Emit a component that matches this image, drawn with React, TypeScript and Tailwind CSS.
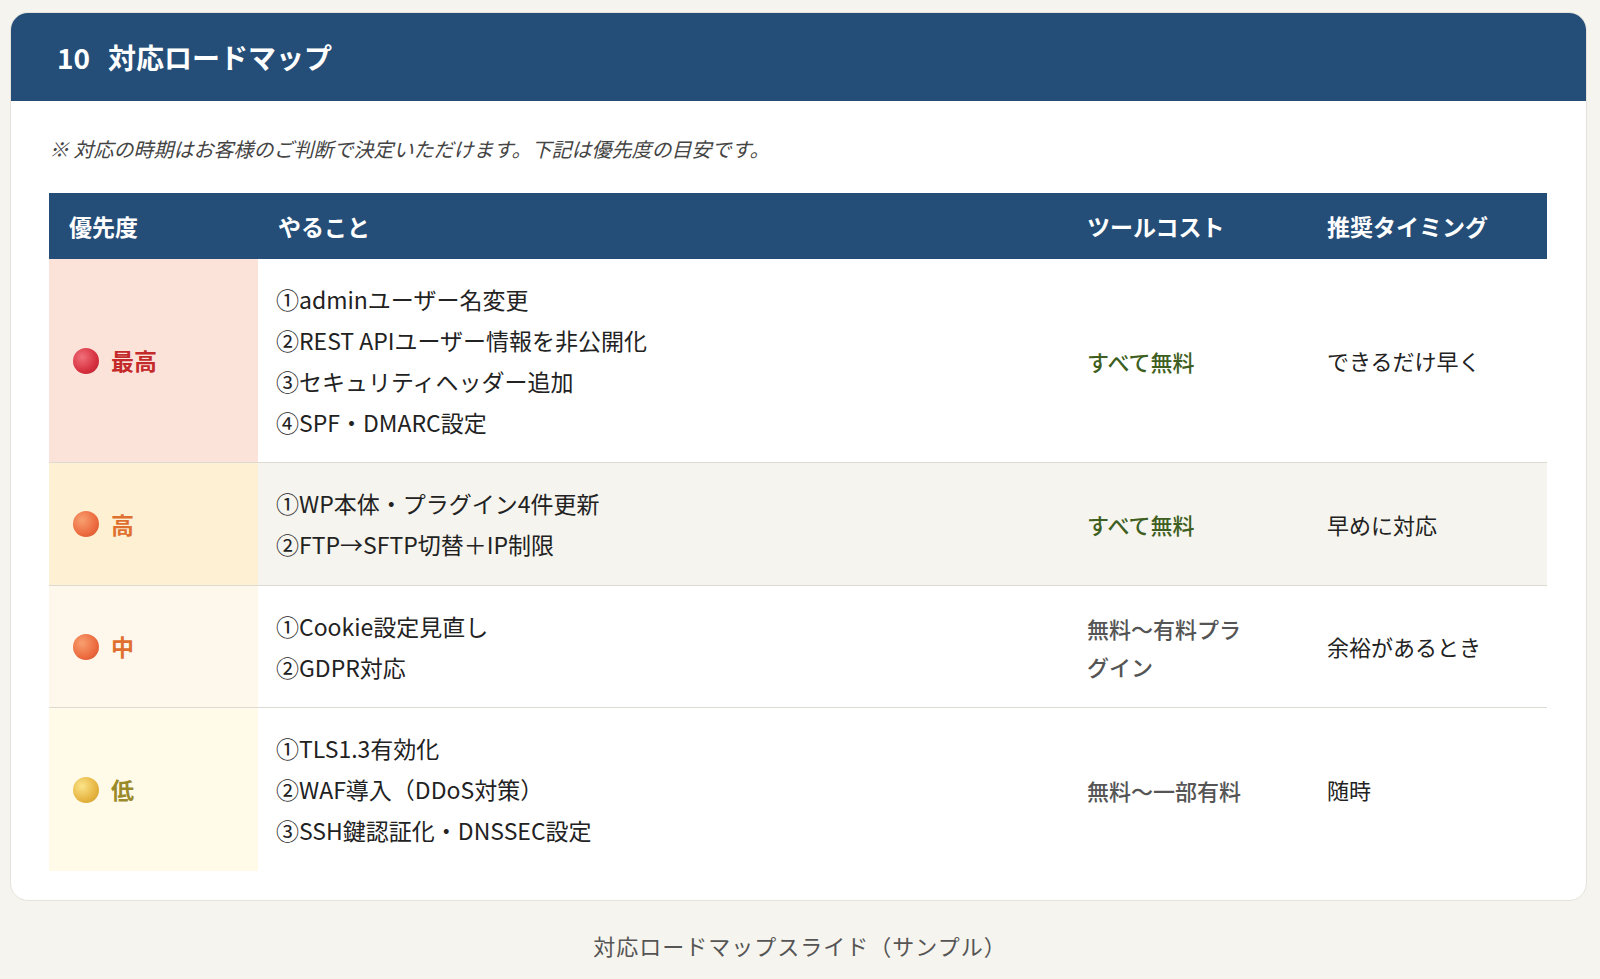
import React from "react";

const F = { fontFamily: '"Noto Sans CJK JP", "Noto Sans", sans-serif' };

type Row = {
  label: string; dot: string; labelColor: string; pbg: string; rbg: string;
  items: string[]; cost: React.ReactNode; costCls: string; timing: string; h: string;
};

const rows: Row[] = [
  { label: "最高", dot: "radial-gradient(circle at 35% 35%, #f0707a, #d6303e 60%, #b0202c)", labelColor: "text-[#c42a2a]", pbg: "bg-[#fce3da]", rbg: "bg-white", items: ["①adminユーザー名変更", "②REST APIユーザー情報を非公開化", "③セキュリティヘッダー追加", "④SPF・DMARC設定"], cost: "すべて無料", costCls: "text-[#3f5f22]", timing: "できるだけ早く", h: "h-[204px]" },
  { label: "高", dot: "radial-gradient(circle at 35% 35%, #f8a070, #ec6a3e 60%, #d0502a)", labelColor: "text-[#e0702f]", pbg: "bg-[#fdf0d3]", rbg: "bg-[#f5f4ee]", items: ["①WP本体・プラグイン4件更新", "②FTP→SFTP切替＋IP制限"], cost: "すべて無料", costCls: "text-[#3f5f22]", timing: "早めに対応", h: "h-[123px]" },
  { label: "中", dot: "radial-gradient(circle at 35% 35%, #f8a070, #ec6a3e 60%, #d0502a)", labelColor: "text-[#e0702f]", pbg: "bg-[#fef8ec]", rbg: "bg-white", items: ["①Cookie設定見直し", "②GDPR対応"], cost: <>無料〜有料プラ<br />グイン</>, costCls: "text-[#555]", timing: "余裕があるとき", h: "h-[122px]" },
  { label: "低", dot: "radial-gradient(circle at 35% 35%, #fbe48a, #e6b440 60%, #c99a2a)", labelColor: "text-[#9a8a2a]", pbg: "bg-[#fffbe8]", rbg: "bg-white", items: ["①TLS1.3有効化", "②WAF導入（DDoS対策）", "③SSH鍵認証化・DNSSEC設定"], cost: "無料〜一部有料", costCls: "text-[#555]", timing: "随時", h: "h-[163px]" },
];

export default function App() {
  return (
    <div style={F} className="w-[1600px] h-[979px] bg-[#f5f4ee] pt-[12px] px-[10px] text-[#222]">
      <div className="w-[1577px] bg-white rounded-[18px] border border-[#e4e2da] overflow-hidden">
        <div className="h-[88px] bg-[#244e78] flex items-center pl-[46px] text-white text-[28px] font-bold">
          <span>10</span><span className="ml-[18px]">対応ロードマップ</span>
        </div>
        <div className="px-[38px] pb-[29px]">
          <div className="h-[92px] flex items-center text-[20px] italic text-[#444] pt-[4px]">※ 対応の時期はお客様のご判断で決定いただけます。下記は優先度の目安です。</div>
          <div className="w-[1498px]">
            <div className="h-[66px] bg-[#244e78] text-white text-[23px] font-bold flex items-center">
              <div className="w-[209px] pl-[20px]">優先度</div>
              <div className="w-[812px] pl-[20px]">やること</div>
              <div className="w-[240px] pl-[17px]">ツールコスト</div>
              <div className="flex-1 pl-[17px]">推奨タイミング</div>
            </div>
            {rows.map((r, i) => (
              <div key={i} className={`flex ${r.h} ${r.rbg} ${i < 3 ? "border-b border-[#dcdad2]" : ""}`}>
                <div className={`w-[209px] ${r.pbg} flex items-center pl-[24px] gap-[12px]`}>
                  <span className="w-[26px] h-[26px] rounded-full" style={{ background: r.dot }} />
                  <span className={`text-[23px] font-bold ${r.labelColor}`}>{r.label}</span>
                </div>
                <div className="w-[812px] pl-[18px] flex flex-col justify-center text-[23px] leading-[41px]">
                  {r.items.map((t) => <div key={t}>{t}</div>)}
                </div>
                <div className={`w-[240px] pl-[17px] flex items-center text-[22px] leading-[38px] font-medium ${r.costCls}`}>{r.cost}</div>
                <div className="flex-1 pl-[17px] flex items-center text-[22px]">{r.timing}</div>
              </div>
            ))}
          </div>
        </div>
      </div>
      <div className="text-center text-[22px] text-[#555] mt-[28px] tracking-[1px]">対応ロードマップスライド（サンプル）</div>
    </div>
  );
}
